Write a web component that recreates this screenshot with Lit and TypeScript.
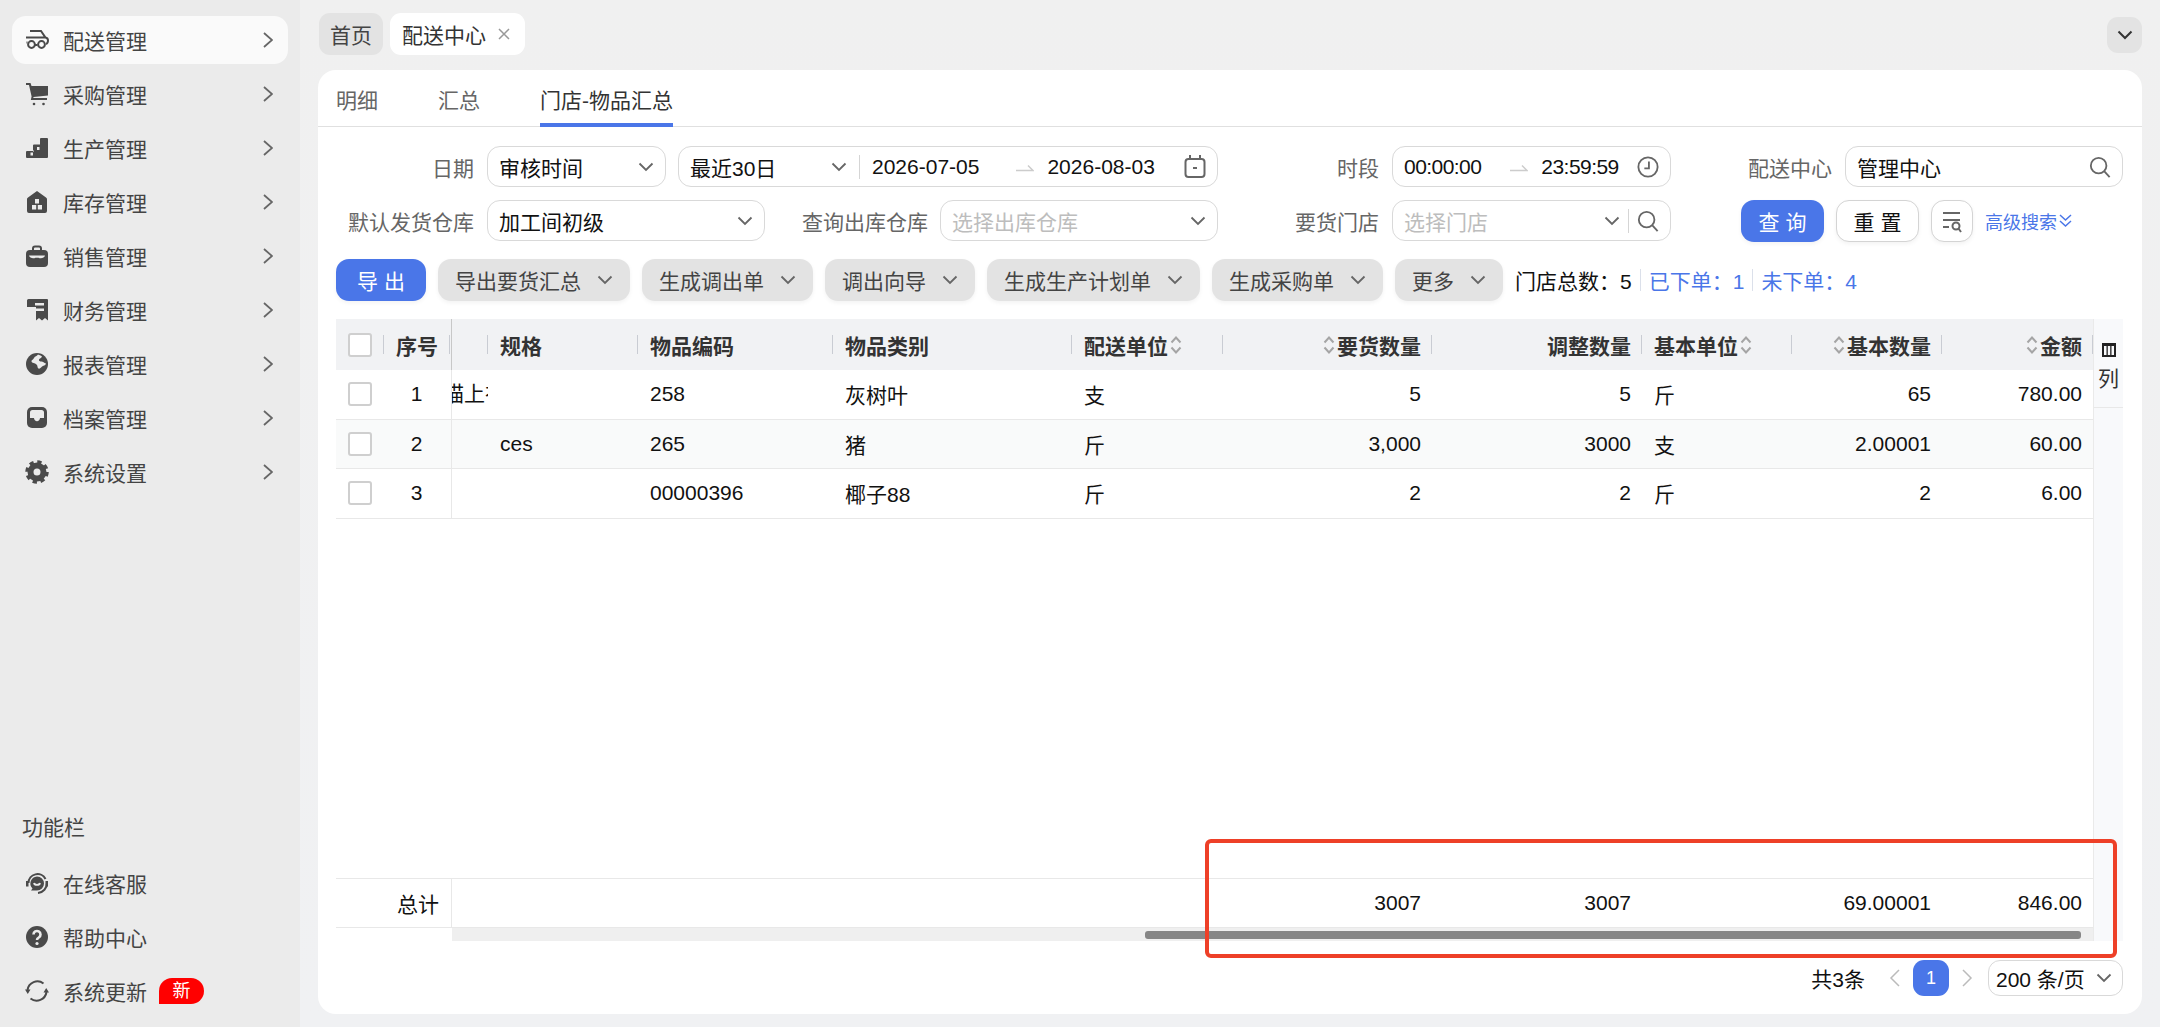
import { LitElement, html, css, svg } from "lit";
import { customElement } from "lit/decorators.js";

const icons: Record<string, unknown> = {
  car: svg`<g fill="none" stroke="currentColor" stroke-width="2"><path d="M5 3h11l4.500 6.500c1.600.3 2.500 1.400 2.500 3 0 1.800-.6 3-2 3.500M12.500 17H10M1 9.500h19M1.500 14.500h1"/><circle cx="6.500" cy="16.500" r="3.400"/><circle cx="16.500" cy="16.500" r="3.400"/></g>`,
  cart: svg`<path fill="currentColor" d="M1 1h4.500l1 3H23v9.500L8.500 15l-.2 1H22v2H5.800l.8-3.500L4 3H1z"/><circle cx="9" cy="22" r="1.300" fill="currentColor"/><circle cx="18.500" cy="22" r="1.300" fill="currentColor"/>`,
  steps: svg`<path fill="currentColor" d="M16 2h6a1 1 0 0 1 1 1v18a1 1 0 0 1-1 1H2a1 1 0 0 1-1-1v-5a1 1 0 0 1 1-1h6V9.500a1 1 0 0 1 1-1h6V3a1 1 0 0 1 1-1z"/><path fill="#ebebeb" d="M5.500 16.500h2.500v3H5.500zM12 11h2.500v3H12zM8 14.500h1v1H8z"/>`,
  house: svg`<path fill="currentColor" d="M12 1l9 6.500c.7.500 1 1 1 2V21a2 2 0 0 1-2 2H4a2 2 0 0 1-2-2V9.500c0-1 .3-1.500 1-2z"/><path fill="#ebebeb" d="M10 9h4v4.500h-4zM7 15h4.200v4.500H7zM12.800 15H17v4.500h-4.200z"/>`,
  bag: svg`<path fill="none" stroke="currentColor" stroke-width="2" d="M8 7V4.500A2 2 0 0 1 10 2.500h4a2 2 0 0 1 2 2V7"/><rect x="1" y="6" width="22" height="17" rx="4" fill="currentColor"/><path fill="#ebebeb" d="M4 11.500h16c-.6 2.800-4.500 3.400-6.500 2.200h-3C8.500 14.900 4.600 14.300 4 11.500z"/>`,
  receipt: svg`<path fill="currentColor" d="M3.500 1H22a1 1 0 0 1 1 1v20.500l-3-2.500-3 2.500-3-2.500-3 2.500V9H2V2.500A1.500 1.500 0 0 1 3.500 1z"/><path fill="#ebebeb" d="M10 5h9v2.500h-9zM10 10.500h9V13h-9z"/>`,
  globe: svg`<circle cx="12" cy="12" r="11" fill="currentColor"/><path fill="#ebebeb" d="M13 2.500c-1 1.800-3 1.500-4 3.500s-2.800 2-2.500 3.500 3.500 1.500 5 3 .5 3 2 4 3-2 4.500-2.500 2.500-1 3-2.500c-2-.5-3-2-4.500-2s-3-.5-2.500-2 2.500-1 3-3c-1.500-1-2.500-1.500-4-2z"/>`,
  inbox: svg`<rect x="2" y="1" width="20" height="21" rx="5" fill="currentColor"/><path fill="#ebebeb" d="M5 12V6.500A2.500 2.500 0 0 1 7.500 4h9A2.500 2.500 0 0 1 19 6.500V12h-4c0 2-1.500 3.200-3 3.200S9 14 9 12z"/>`,
  gear: svg`<circle cx="12" cy="12" r="6.500" fill="none" stroke="currentColor" stroke-width="6"/><circle cx="12" cy="12" r="10" fill="none" stroke="currentColor" stroke-width="3.500" stroke-dasharray="4.200 3.650"/>`,
  headset: svg`<g fill="none" stroke="currentColor" stroke-width="2"><path d="M3.500 12a9 9 0 0 1 17-4M22 12a10 10 0 0 1-9 10"/></g><path fill="currentColor" d="M1 10h2.500v5.500H1zM20.500 10H23v5.500h-2.500z"/><path fill="currentColor" d="M12 5.500a7 7 0 0 1 0 14H6l1.500-2A7 7 0 0 1 12 5.500z"/><path fill="none" stroke="#ebebeb" stroke-width="1.800" d="M9 12c.5 2.500 5.500 2.500 6 0"/>`,
  help: svg`<circle cx="12" cy="12" r="11" fill="currentColor"/><path fill="none" stroke="#ebebeb" stroke-width="2.600" d="M8.500 9.500a3.500 3.500 0 1 1 5.300 3c-1.200.7-1.800 1.300-1.800 2.500"/><circle cx="12" cy="18.500" r="1.600" fill="#ebebeb"/>`,
  refresh: svg`<g fill="none" stroke="currentColor" stroke-width="2"><path d="M2.500 11a10 10 0 0 1 16-6.500M21.500 13a10 10 0 0 1-16 6.500"/></g><path fill="currentColor" d="M0 10.500h5.500L2.800 15zM18.500 13.500H24L21.200 9z"/>`,
};

const menuItems = [
  ["car", "配送管理"],
  ["cart", "采购管理"],
  ["steps", "生产管理"],
  ["house", "库存管理"],
  ["bag", "销售管理"],
  ["receipt", "财务管理"],
  ["globe", "报表管理"],
  ["inbox", "档案管理"],
  ["gear", "系统设置"],
];

const actions = ["导出要货汇总", "生成调出单", "调出向导", "生成生产计划单", "生成采购单", "更多"];

const rows = [
  ["1", "", "258", "灰树叶", "支", "5", "5", "斤", "65", "780.00"],
  ["2", "ces", "265", "猪", "斤", "3,000", "3000", "支", "2.00001", "60.00"],
  ["3", "", "00000396", "椰子88", "斤", "2", "2", "斤", "2", "6.00"],
];

const chevron = html`<svg class="chev" width="16" height="10" viewBox="0 0 16 10"><path d="M1.500 1.500L8 8l6.500-6.500" /></svg>`;
const arrow = html`<svg class="range-arrow" width="18" height="10" viewBox="0 0 18 10"><path d="M0 8.500h17L12 3.500" /></svg>`;
const sort = html`<svg class="sort" width="12" height="18" viewBox="0 0 12 18"><path d="M1.500 6.500L6 1.500l4.500 5M1.500 11.500L6 16.500l4.500-5" /></svg>`;
const search = html`<svg class="line-icon" width="22" height="22" viewBox="0 0 24 24"><circle cx="10.500" cy="10.500" r="8.500" /><path d="M16.500 16.500L22.500 23" /></svg>`;

@customElement("app-root")
export class AppRoot extends LitElement {
  static styles = css`
    :host {
      display: flex;
      position: relative;
      height: 100vh;
      min-height: 1027px;
      overflow: hidden;
      background: linear-gradient(#f0f0f0, #f0f1f3);
      font-family: "Liberation Sans", "Noto Sans CJK SC", sans-serif;
      font-size: 21px;
      color: #111;
    }

    svg {
      flex: none;
      display: block;
    }

    .sidebar {
      flex: none;
      width: 300px;
      box-sizing: border-box;
      padding: 16px 12px 12px;
      background: #ebebeb;
      display: flex;
      flex-direction: column;
      justify-content: space-between;
    }

    .menu {
      display: flex;
      flex-direction: column;
      gap: 6px;
    }

    .item {
      height: 48px;
      display: flex;
      align-items: center;
      gap: 14px;
      padding: 0 15px 0 13px;
      border-radius: 14px;
      color: #444;
    }

    .item.active {
      background: #fafafa;
    }

    .item .icon {
      color: #4a4a4a;
    }

    .item .next {
      margin-left: auto;
      fill: none;
      stroke: #666;
      stroke-width: 1.800;
    }

    .func-title {
      height: 28px;
      line-height: 28px;
      margin: 0 0 17px 10px;
      color: #444;
    }

    .new {
      margin-left: -2px;
      width: 45px;
      height: 26px;
      line-height: 26px;
      text-align: center;
      background: #ff0000;
      color: #fff;
      font-size: 18px;
      border-radius: 13px 13px 13px 0;
    }

    .main {
      flex: 1;
      min-width: 0;
      display: flex;
      flex-direction: column;
      padding: 13px 18px 13px;
    }

    .tabs {
      display: flex;
      gap: 7px;
      height: 42px;
      margin: 0 0 15px 1px;
    }

    .tab {
      display: flex;
      align-items: center;
      gap: 11px;
      padding: 0 11px;
      border-radius: 11px;
      background: #e3e3e3;
      color: #444;
    }

    .tab.current {
      padding: 0 14px 0 12px;
      background: #fff;
      color: #333;
    }

    .tab .close {
      fill: none;
      stroke: #999;
      stroke-width: 1.500;
    }

    .collapse {
      margin: 4px 0 0 auto;
      width: 35px;
      height: 36px;
      border-radius: 11px;
      background: #e3e3e3;
      display: flex;
      align-items: center;
      justify-content: center;
    }

    .collapse .chev {
      stroke: #333;
      stroke-width: 2;
    }

    .card {
      flex: 1;
      min-height: 0;
      background: #fff;
      border-radius: 18px;
      padding: 0 19px 18px 18px;
      display: flex;
      flex-direction: column;
    }

    .subtabs {
      height: 57px;
      box-sizing: border-box;
      margin: 0 -19px 0 -18px;
      padding: 0 18px;
      border-bottom: 1px solid #e0e0e0;
      display: flex;
      gap: 60px;
      flex: none;
    }

    .subtab {
      height: 57px;
      box-sizing: border-box;
      padding-top: 16px;
      line-height: 30px;
      color: #666;
      border-bottom: 4px solid transparent;
    }

    .subtab.current {
      color: #333;
      border-bottom-color: #4a76e8;
    }

    .filters {
      display: grid;
      grid-template-columns: 151px 731px 174px 279px 174px 278px;
      grid-auto-rows: 41px;
      row-gap: 13px;
      margin-top: 19px;
      align-items: center;
      flex: none;
    }

    .label {
      padding-right: 13px;
      text-align: right;
      color: #666;
      white-space: nowrap;
    }

    .control-group {
      display: flex;
      align-items: center;
      gap: 12px;
    }

    .control-group.tight {
      gap: 0;
    }

    .control-group .label {
      width: 175px;
      box-sizing: border-box;
      padding-right: 12px;
    }

    .box {
      height: 41px;
      box-sizing: border-box;
      border: 1px solid #d9d9d9;
      border-radius: 13px;
      padding: 0 11px;
      display: flex;
      align-items: center;
      white-space: nowrap;
      color: #111;
    }

    .box .end {
      margin-left: auto;
    }

    .placeholder {
      color: #bdbdbd;
    }

    .chev {
      fill: none;
      stroke: #666;
      stroke-width: 1.800;
    }

    .range-arrow {
      fill: none;
      stroke: #ccc;
      stroke-width: 1.500;
    }

    .line-icon {
      fill: none;
      stroke: #666;
      stroke-width: 2;
    }

    .w-180 {
      width: 179px;
    }

    .w-540 {
      width: 540px;
    }

    .w-278 {
      width: 278px;
      flex: none;
    }

    .preset {
      width: 169px;
      display: flex;
      align-items: center;
      flex: none;
      box-sizing: border-box;
      padding-right: 12px;
    }

    .preset .chev {
      margin-left: auto;
    }

    .vline {
      flex: none;
      width: 1px;
      height: 24px;
      background: #d5d5d5;
    }

    .search-split {
      margin: 0 8px;
    }

    .date-from {
      margin-left: 12px;
    }

    .date-arrow {
      margin: 0 13px 0 37px;
    }

    .time {
      letter-spacing: -0.550px;
    }

    .time-arrow {
      margin: 0 13px 0 29px;
    }

    .query-actions {
      grid-column: span 2;
      display: flex;
      align-items: center;
      gap: 12px;
      padding-left: 70px;
    }

    .btn {
      height: 42px;
      box-sizing: border-box;
      border-radius: 13px;
      display: flex;
      align-items: center;
      justify-content: center;
      flex: none;
      white-space: nowrap;
      box-shadow: 0 2px 4px rgba(0, 0, 0, 0.05);
    }

    .btn.primary {
      background: #4a76e8;
      color: #fff;
    }

    .btn.outline {
      border: 1px solid #d4d4d4;
      background: #fff;
    }

    .btn.wide {
      width: 83px;
    }

    .btn.export {
      width: 90px;
    }

    .btn.square {
      width: 42px;
    }

    .more-search {
      display: flex;
      align-items: center;
      gap: 2px;
      font-size: 18px;
      color: #4a76e8;
      white-space: nowrap;
    }

    .more-search svg {
      fill: none;
      stroke: #4a76e8;
      stroke-width: 1.500;
    }

    .toolbar {
      display: flex;
      align-items: center;
      gap: 12px;
      margin-top: 18px;
      flex: none;
    }

    .btn.action {
      background: #e3e3e3;
      color: #444;
      gap: 16px;
      padding: 0 17px 0 17px;
    }

    .summary {
      display: flex;
      align-items: center;
      white-space: nowrap;
    }

    .summary b {
      font-weight: 400;
      color: #4a76e8;
    }

    .summary i {
      width: 1px;
      height: 22px;
      background: #dbe0ea;
      margin: 0 8px;
    }

    .grid-wrap {
      flex: 1;
      min-height: 0;
      margin-top: 18px;
      display: flex;
      --cols: 48px 68px 36px 150px 195px 239px 151px 209px 210px 150px 150px 151px;
    }

    .table {
      width: 1757px;
      flex: none;
      display: flex;
      flex-direction: column;
    }

    .row {
      display: grid;
      grid-template-columns: var(--cols);
    }

    .head {
      height: 51px;
      background: #f1f2f4;
      font-weight: 700;
      color: #333;
      flex: none;
    }

    .th {
      display: flex;
      align-items: center;
      gap: 2px;
      padding: 0 11px 0 12px;
      white-space: nowrap;
      background: linear-gradient(#c9ccd3, #c9ccd3) right center / 1px 19px no-repeat;
    }

    .th.right {
      justify-content: flex-end;
    }

    .th.seq {
      background-position: right 1px center;
      border-right: 1px solid #c8c8c8;
    }

    .sort {
      fill: none;
      stroke: #a5a5a5;
      stroke-width: 2;
    }

    .body {
      flex: 1;
      min-height: 0;
    }

    .tr {
      height: 49.600px;
      box-sizing: border-box;
      border-bottom: 1px solid #e8e8e8;
    }

    .tr.even {
      background: #f9fafa;
    }

    .td {
      display: flex;
      align-items: center;
      padding: 0 11px 0 12px;
      white-space: nowrap;
      min-width: 0;
    }

    .td.right {
      justify-content: flex-end;
    }

    .td.seq {
      justify-content: center;
      padding: 0 2px 0 0;
      border-right: 1px solid #e8e8e8;
    }

    .td.clip {
      display: block;
      padding: 0;
      overflow: hidden;
      text-indent: -9px;
      line-height: 48px;
    }

    .check {
      width: 24px;
      height: 24px;
      box-sizing: border-box;
      border: 2px solid #cfcfcf;
      border-radius: 3px;
      background: #fff;
    }

    .total {
      height: 50px;
      flex: none;
      box-sizing: border-box;
      border-top: 1px solid #e8e8e8;
      border-bottom: 1px solid #e8e8e8;
    }

    .td.total-label {
      grid-column: span 2;
      justify-content: flex-end;
      padding-right: 12px;
      border-right: 1px solid #e8e8e8;
    }

    .track {
      height: 13px;
      flex: none;
      margin-left: 116px;
      box-sizing: border-box;
      padding: 3px 12px 2px 0;
      background: #efefef;
      display: flex;
      justify-content: flex-end;
    }

    .thumb {
      width: 936px;
      border-radius: 3px;
      background: #868686;
    }

    .col-panel {
      width: 30px;
      flex: none;
      background: #f8f9fb;
      border-left: 1px solid #eaeaea;
      box-sizing: border-box;
    }

    .col-btn {
      height: 89px;
      box-sizing: border-box;
      padding-top: 24px;
      border-bottom: 1px solid #e8e8e8;
      display: flex;
      flex-direction: column;
      align-items: center;
      gap: 10px;
    }

    .col-btn span {
      line-height: 24px;
      color: #333;
    }

    .pager {
      flex: none;
      margin-top: 19px;
      height: 36px;
      display: flex;
      align-items: center;
      justify-content: flex-end;
    }

    .pager .arrow {
      fill: none;
      stroke: #bbb;
      stroke-width: 1.500;
    }

    .prev {
      margin: 0 13px 0 24px;
    }

    .next-page {
      margin: 0 15px 0 13px;
    }

    .page {
      width: 36px;
      height: 36px;
      border-radius: 11px;
      background: #4a76e8;
      color: #fff;
      font-size: 18px;
      display: flex;
      align-items: center;
      justify-content: center;
    }

    .size {
      width: 135px;
      height: 36px;
      padding: 0 10px 0 7px;
      border-radius: 12px;
    }

    .mark {
      position: absolute;
      left: 1205px;
      top: 839px;
      width: 912px;
      height: 119px;
      box-sizing: border-box;
      border: 4px solid #ee4028;
      border-radius: 6px;
      pointer-events: none;
    }
  `;

  private icon(name: string) {
    return html`<svg class="icon" width="24" height="24" viewBox="0 0 24 24">${icons[name]}</svg>`;
  }

  private navItem(name: string, label: string, active = false, more = true) {
    return html`
      <div class="item ${active ? "active" : ""}">
        ${this.icon(name)}
        <span>${label}</span>
        ${more
          ? html`<svg class="next" width="10" height="16" viewBox="0 0 10 16"><path d="M1 1l8 7-8 7" /></svg>`
          : ""}
      </div>
    `;
  }

  private renderSidebar() {
    return html`
      <aside class="sidebar">
        <nav class="menu">
          ${menuItems.map(([icon, label], i) => this.navItem(icon, label, i === 0))}
        </nav>
        <div>
          <div class="func-title">功能栏</div>
          <div class="menu">
            ${this.navItem("headset", "在线客服", false, false)}
            ${this.navItem("help", "帮助中心", false, false)}
            <div class="item">
              ${this.icon("refresh")}
              <span>系统更新</span>
              <span class="new">新</span>
            </div>
          </div>
        </div>
      </aside>
    `;
  }

  private renderFilters() {
    return html`
      <div class="filters">
        <div class="label">日期</div>
        <div class="control-group">
          <div class="box w-180"><span>审核时间</span><span class="end">${chevron}</span></div>
          <div class="box w-540">
            <div class="preset"><span>最近30日</span>${chevron}</div>
            <div class="vline"></div>
            <span class="date-from">2026-07-05</span>
            <span class="date-arrow">${arrow}</span>
            <span>2026-08-03</span>
            <svg class="line-icon end" width="22" height="24" viewBox="0 0 22 24">
              <rect x="1.500" y="4" width="19" height="18" rx="3" />
              <path d="M6 0v5M16 0v5M9 13h4" />
            </svg>
          </div>
        </div>
        <div class="label">时段</div>
        <div class="box">
          <span class="time">00:00:00</span>
          <span class="time-arrow">${arrow}</span>
          <span class="time">23:59:59</span>
          <svg class="line-icon end" width="22" height="22" viewBox="0 0 24 24">
            <circle cx="12" cy="12" r="10.500" />
            <path d="M13 6v7.500H8" />
          </svg>
        </div>
        <div class="label">配送中心</div>
        <div class="box"><span>管理中心</span><span class="end">${search}</span></div>

        <div class="label">默认发货仓库</div>
        <div class="control-group tight">
          <div class="box w-278"><span>加工间初级</span><span class="end">${chevron}</span></div>
          <div class="label">查询出库仓库</div>
          <div class="box w-278"><span class="placeholder">选择出库仓库</span><span class="end">${chevron}</span></div>
        </div>
        <div class="label">要货门店</div>
        <div class="box">
          <span class="placeholder">选择门店</span>
          <span class="end">${chevron}</span>
          <span class="vline search-split"></span>
          ${search}
        </div>
        <div class="query-actions">
          <div class="btn primary wide">查 询</div>
          <div class="btn outline wide">重 置</div>
          <div class="btn outline square">
            <svg class="line-icon" width="22" height="24" viewBox="0 0 22 24">
              <path d="M2 4h17M2 11h17M2 18h6" />
              <circle cx="15" cy="17" r="3.500" />
              <path d="M17.500 19.500L20 23" />
            </svg>
          </div>
          <div class="more-search">
            高级搜索
            <svg width="13" height="16" viewBox="0 0 13 16"><path d="M1 2l5.500 5L12 2M1 8l5.500 5L12 8" /></svg>
          </div>
        </div>
      </div>
    `;
  }

  private renderToolbar() {
    return html`
      <div class="toolbar">
        <div class="btn primary export">导 出</div>
        ${actions.map((a) => html`<div class="btn action"><span>${a}</span>${chevron}</div>`)}
        <div class="summary">
          门店总数：5<i></i><b>已下单：1</b><i></i><b>未下单：4</b>
        </div>
      </div>
    `;
  }

  private renderTable() {
    return html`
      <div class="grid-wrap">
        <div class="table">
          <div class="row head">
            <div class="th"><span class="check"></span></div>
            <div class="th seq">序号</div>
            <div class="th"></div>
            <div class="th">规格</div>
            <div class="th">物品编码</div>
            <div class="th">物品类别</div>
            <div class="th">配送单位${sort}</div>
            <div class="th right">${sort}要货数量</div>
            <div class="th right">调整数量</div>
            <div class="th">基本单位${sort}</div>
            <div class="th right">${sort}基本数量</div>
            <div class="th right">${sort}金额</div>
          </div>
          <div class="body">
            ${rows.map(
              (r, i) => html`
                <div class="row tr ${i % 2 ? "even" : ""}">
                  <div class="td"><span class="check"></span></div>
                  <div class="td seq">${r[0]}</div>
                  <div class="td clip">${i === 0 ? "描上衣" : ""}</div>
                  <div class="td">${r[1]}</div>
                  <div class="td">${r[2]}</div>
                  <div class="td">${r[3]}</div>
                  <div class="td">${r[4]}</div>
                  <div class="td right">${r[5]}</div>
                  <div class="td right">${r[6]}</div>
                  <div class="td">${r[7]}</div>
                  <div class="td right">${r[8]}</div>
                  <div class="td right">${r[9]}</div>
                </div>
              `
            )}
          </div>
          <div class="row total">
            <div class="td total-label">总计</div>
            <div class="td"></div>
            <div class="td"></div>
            <div class="td"></div>
            <div class="td"></div>
            <div class="td"></div>
            <div class="td right">3007</div>
            <div class="td right">3007</div>
            <div class="td"></div>
            <div class="td right">69.00001</div>
            <div class="td right">846.00</div>
          </div>
          <div class="track"><div class="thumb"></div></div>
        </div>
        <div class="col-panel">
          <div class="col-btn">
            <svg width="14" height="14" viewBox="0 0 14 14">
              <path fill="#222" d="M0 0h14v14H0zM2 3v9h2.500V3zm3.800 0v9h2.400V3zm3.700 0v9H12V3z" fill-rule="evenodd" />
            </svg>
            <span>列</span>
          </div>
        </div>
      </div>
    `;
  }

  render() {
    return html`
      ${this.renderSidebar()}
      <main class="main">
        <div class="tabs">
          <div class="tab">首页</div>
          <div class="tab current">
            配送中心
            <svg class="close" width="14" height="14" viewBox="0 0 14 14"><path d="M2 2l10 10M12 2L2 12" /></svg>
          </div>
          <div class="collapse">${chevron}</div>
        </div>
        <section class="card">
          <div class="subtabs">
            <div class="subtab">明细</div>
            <div class="subtab">汇总</div>
            <div class="subtab current">门店-物品汇总</div>
          </div>
          ${this.renderFilters()} ${this.renderToolbar()} ${this.renderTable()}
          <div class="pager">
            <span>共3条</span>
            <svg class="arrow prev" width="11" height="18" viewBox="0 0 11 18"><path d="M10 1L2 9l8 8" /></svg>
            <div class="page">1</div>
            <svg class="arrow next-page" width="11" height="18" viewBox="0 0 11 18"><path d="M1 1l8 8-8 8" /></svg>
            <div class="box size"><span>200 条/页</span><span class="end">${chevron}</span></div>
          </div>
        </section>
      </main>
      <div class="mark"></div>
    `;
  }
}
